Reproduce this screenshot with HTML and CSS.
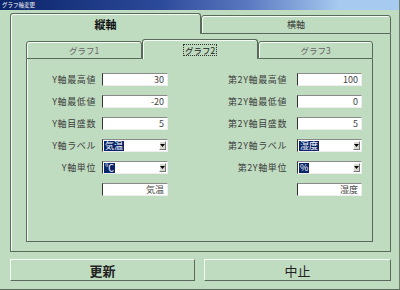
FILE: index.html
```html
<!DOCTYPE html>
<html lang="ja">
<head>
    <meta charset="UTF-8">
    <title>グラフ軸変更</title>
    <link rel="stylesheet" href="styles.css">
</head>
<body>
    <div class="window">
        <div class="titlebar">グラフ軸変更</div>
        <div class="content">
            <div class="tabs outer-tabs">
                <div class="tab outer-tab active">縦軸</div>
                <div class="tab outer-tab">横軸</div>
            </div>
            <div class="outer-panel">
                <div class="tabs inner-tabs">
                    <div class="tab inner-tab">グラフ1</div>
                    <div class="tab inner-tab active"><span class="focus">グラフ2</span></div>
                    <div class="tab inner-tab">グラフ3</div>
                </div>
                <div class="inner-panel">
                    <div class="fields">
                        <label>Y軸最高値</label>
                        <div class="input">30</div>
                        <label>Y軸最低値</label>
                        <div class="input">-20</div>
                        <label>Y軸目盛数</label>
                        <div class="input">5</div>
                        <label>Y軸ラベル</label>
                        <div class="combo"><span class="sel">気温</span><span class="arrow"><svg width="5" height="3" viewBox="0 0 5 3"><path d="M0 0h5L2.5 3z" fill="#000"/></svg></span></div>
                        <label>Y軸単位</label>
                        <div class="combo"><span class="sel">℃</span><span class="arrow"><svg width="5" height="3" viewBox="0 0 5 3"><path d="M0 0h5L2.5 3z" fill="#000"/></svg></span></div>
                        <span></span>
                        <div class="input">気温</div>
                    </div>
                    <div class="fields right">
                        <label>第2Y軸最高値</label>
                        <div class="input">100</div>
                        <label>第2Y軸最低値</label>
                        <div class="input">0</div>
                        <label>第2Y軸目盛数</label>
                        <div class="input">5</div>
                        <label>第2Y軸ラベル</label>
                        <div class="combo"><span class="sel">湿度</span><span class="arrow"><svg width="5" height="3" viewBox="0 0 5 3"><path d="M0 0h5L2.5 3z" fill="#000"/></svg></span></div>
                        <label>第2Y軸単位</label>
                        <div class="combo"><span class="sel">%</span><span class="arrow"><svg width="5" height="3" viewBox="0 0 5 3"><path d="M0 0h5L2.5 3z" fill="#000"/></svg></span></div>
                        <span></span>
                        <div class="input">湿度</div>
                    </div>
                </div>
            </div>
            <div class="buttons">
                <div class="btn update">更新</div>
                <div class="btn cancel">中止</div>
            </div>
        </div>
    </div>
</body>
</html>
```

FILE: styles.css
```css
body {
    margin: 0;
    font-family: "Noto Sans CJK JP", "DejaVu Sans", sans-serif;
}
.window {
    width: 400px;
    height: 290px;
    box-sizing: border-box;
    background-color: #c0dcc0;
    border-right: 1px solid #6f806f;
    border-bottom: 1px solid #5a6a5a;
}
.titlebar {
    height: 10px;
    padding-left: 2px;
    background: linear-gradient(to right, #0a246a 0%, #2c4a9a 40%, #5a78c0 62%, #a6caf0 85%, #a6caf0 100%);
    color: #fff;
    font-size: 5.5px;
    line-height: 10px;
}
.content {
    padding-left: 10px;
}
.tabs {
    display: flex;
    align-items: flex-end;
}
.tab {
    box-sizing: border-box;
    border: 1px solid #5a6a5a;
    border-radius: 3px 3px 0 0;
    box-shadow: inset 1px 1px 0 #f4fbf4;
    display: flex;
    align-items: center;
    justify-content: center;
    color: #333;
}
.tab.active {
    border-bottom: none;
}
.outer-tabs {
    height: 24px;
}
.outer-tab {
    width: 190px;
    height: 19px;
    font-size: 9px;
}
.outer-tab.active {
    width: 191px;
    height: 21px;
    font-size: 11px;
    font-weight: bold;
    color: #111;
}
.outer-panel {
    width: 381px;
    box-sizing: border-box;
    border: 1px solid #5a6a5a;
    border-top: none;
    padding: 5px 17px 9px 15px;
    box-shadow: inset 1px 0 0 #f4fbf4;
}
.inner-tabs {
    height: 20px;
}
.inner-tab {
    width: 116px;
    height: 18px;
    font-size: 8.5px;
    color: #666;
}
.inner-tab:last-child {
    width: 115px;
}
.inner-tab.active {
    height: 20px;
    color: #222;
}
.focus {
    border: 1px dotted #333;
    padding: 0 1px;
    line-height: 10px;
}
.inner-panel {
    width: 347px;
    height: 183px;
    box-sizing: border-box;
    border: 1px solid #5a6a5a;
    border-top: none;
    box-shadow: inset 1px 0 0 #f4fbf4;
    padding-top: 14px;
    display: flex;
    align-items: flex-start;
}
.fields {
    display: grid;
    grid-template-columns: 69px 66px;
    grid-auto-rows: 13px;
    column-gap: 6px;
    row-gap: 9px;
    align-items: center;
}
.fields.right {
    margin-left: 60px;
    grid-template-columns: 59px 65px;
    column-gap: 10px;
}
label {
    text-align: right;
    font-size: 9px;
    letter-spacing: 0.6px;
    line-height: 13px;
    color: #3c3c3c;
    white-space: nowrap;
}
.input {
    height: 13px;
    box-sizing: border-box;
    background-color: #fff;
    border-top: 1px solid #8a8a8a;
    border-left: 1px solid #333;
    border-right: 1px solid #eee;
    border-bottom: 1px solid #eee;
    padding-right: 3px;
    text-align: right;
    font-size: 9px;
    line-height: 11px;
    color: #444;
}
.combo {
    height: 13px;
    box-sizing: border-box;
    background-color: #fff;
    border-top: 1px solid #8a8a8a;
    border-left: 1px solid #333;
    border-right: 1px solid #eee;
    border-bottom: 1px solid #eee;
    display: flex;
    align-items: center;
    padding: 0 1px 0 1px;
}
.sel {
    background-color: #0a246a;
    color: #fff;
    font-size: 9px;
    line-height: 10px;
    padding: 0 1px;
}
.arrow {
    margin-left: auto;
    width: 7px;
    height: 9px;
    box-sizing: border-box;
    background-color: #d8d8d0;
    border: 1px solid;
    border-color: #fff #777 #777 #fff;
    display: flex;
    align-items: center;
    justify-content: center;
}
.buttons {
    display: flex;
    gap: 9px;
    margin-top: 7px;
}
.btn {
    height: 22px;
    box-sizing: border-box;
    border: 1px solid;
    border-color: #f4fbf4 #5a6a5a #5a6a5a #f4fbf4;
    display: flex;
    align-items: center;
    justify-content: center;
    font-size: 13px;
    color: #222;
}
.update {
    width: 185px;
    font-weight: bold;
}
.cancel {
    width: 187px;
}
```
